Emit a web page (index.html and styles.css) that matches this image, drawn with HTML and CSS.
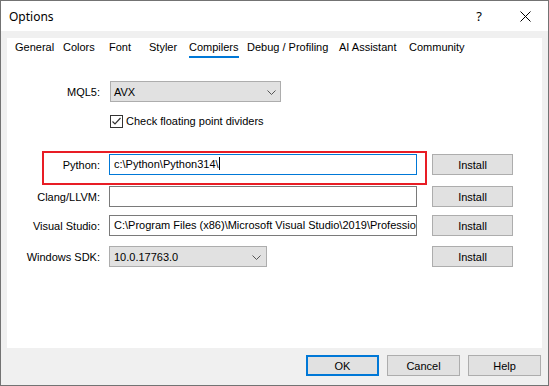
FILE: index.html
```html
<!DOCTYPE html>
<html lang="en">
<head>
  <meta charset="UTF-8">
  <title>Options</title>
  <link rel="stylesheet" href="styles.css">
</head>
<body>
  <div class="window">
    <div class="titlebar">
      <span class="title">Options</span>
      <div class="caption-btns">
        <span class="caption-btn help">?</span>
        <span class="caption-btn close">
          <svg width="11" height="11" viewBox="0 0 11 11"><path d="M0.5 0.5L10.5 10.5M10.5 0.5L0.5 10.5" stroke="#000" stroke-width="1"/></svg>
        </span>
      </div>
    </div>

    <div class="client">
      <div class="panel">
        <div class="tabs">
          <span class="tab">General</span>
          <span class="tab">Colors</span>
          <span class="tab">Font</span>
          <span class="tab">Styler</span>
          <span class="tab active"><span>Compilers</span></span>
          <span class="tab">Debug / Profiling</span>
          <span class="tab">AI Assistant</span>
          <span class="tab">Community</span>
        </div>

        <div class="form">
          <div class="row row-mql">
            <label class="label">MQL5:</label>
            <div class="select select-mql">
              <span>AVX</span>
              <svg class="chevron" width="9" height="5" viewBox="0 0 9 5"><path d="M0.5 0.5L4.5 4.5L8.5 0.5" fill="none" stroke="#555" stroke-width="1"/></svg>
            </div>
          </div>

          <div class="row row-check">
            <span class="checkbox">
              <svg width="11" height="11" viewBox="0 0 11 11"><path d="M1.5 5.5L4 8L9.5 2" fill="none" stroke="#333" stroke-width="1.2"/></svg>
            </span>
            <span>Check floating point dividers</span>
          </div>

          <div class="row row-python">
            <label class="label">Python:</label>
            <div class="input focused">c:\Python\Python314\<span class="caret"></span></div>
            <button class="btn install">Install</button>
          </div>

          <div class="row row-clang">
            <label class="label">Clang/LLVM:</label>
            <div class="input"></div>
            <button class="btn install">Install</button>
          </div>

          <div class="row row-vs">
            <label class="label">Visual Studio:</label>
            <div class="input">C:\Program Files (x86)\Microsoft Visual Studio\2019\Professional</div>
            <button class="btn install">Install</button>
          </div>

          <div class="row row-sdk">
            <label class="label">Windows SDK:</label>
            <div class="select select-sdk">
              <span>10.0.17763.0</span>
              <svg class="chevron" width="9" height="5" viewBox="0 0 9 5"><path d="M0.5 0.5L4.5 4.5L8.5 0.5" fill="none" stroke="#555" stroke-width="1"/></svg>
            </div>
            <button class="btn install install-sdk">Install</button>
          </div>
        </div>
      </div>

      <div class="footer">
        <button class="btn default">OK</button>
        <button class="btn">Cancel</button>
        <button class="btn">Help</button>
      </div>
    </div>
  </div>
</body>
</html>
```

FILE: styles.css
```css
* {
  margin: 0;
  padding: 0;
  box-sizing: border-box;
}
body {
  font-family: "Liberation Sans", Arial, sans-serif;
  font-size: 11px;
  color: #000;
  background: #fff;
}
.window {
  width: 549px;
  height: 386px;
  border: 1px solid #737373;
  display: flex;
  flex-direction: column;
}
.titlebar {
  height: 30px;
  background: #fff;
  display: flex;
  align-items: center;
  justify-content: space-between;
  padding-left: 8px;
}
.title {
  font-family: "Segoe UI", "Noto Sans", sans-serif;
  font-size: 12px;
}
.caption-btns {
  display: flex;
  height: 100%;
}
.caption-btn {
  width: 46px;
  height: 100%;
  display: flex;
  align-items: center;
  justify-content: center;
}
.caption-btn.help {
  font-family: "Segoe UI", "Noto Sans", sans-serif;
  font-size: 13px;
  padding-bottom: 1px;
}
.client {
  flex: 1;
  background: #f0f0f0;
  padding: 7px 6px 9px;
  display: flex;
  flex-direction: column;
}
.panel {
  height: 310px;
  background: #fff;
}
.tabs {
  display: grid;
  grid-template-columns: 48px 46px 40px 40px 58px 92px 70px auto;
  padding: 3px 0 0 8px;
  line-height: 13px;
}
.tab {
  white-space: nowrap;
}
.tab.active span {
  display: inline-block;
  padding-bottom: 2px;
  border-bottom: 2px solid #0078d7;
}
.form {
  padding-top: 23px;
}
.row {
  display: flex;
  align-items: center;
  height: 21px;
}
.label {
  width: 102px;
  padding-right: 9px;
  text-align: right;
  white-space: nowrap;
}
.select {
  height: 21px;
  background: #e1e1e1;
  border: 1px solid #adadad;
  display: flex;
  align-items: center;
  justify-content: space-between;
}
.select-mql {
  width: 171px;
  margin-left: 1px;
  padding: 0 4px 0 3px;
}
.select-sdk {
  width: 158px;
  padding: 0 5px 0 4px;
}
.chevron {
  margin-top: 1px;
}
.row-check {
  height: 13px;
  margin-top: 13px;
  padding-left: 103px;
  line-height: 13px;
}
.checkbox {
  width: 13px;
  height: 13px;
  border: 1px solid #333;
  margin-right: 3px;
  display: flex;
  align-items: center;
  justify-content: center;
}
.input {
  width: 308px;
  height: 21px;
  border: 1px solid #7a7a7a;
  background: #fff;
  padding-left: 4px;
  line-height: 19px;
  white-space: nowrap;
  overflow: hidden;
}
.input.focused {
  border-color: #0078d7;
}
.caret {
  display: inline-block;
  width: 1px;
  height: 13px;
  background: #000;
  vertical-align: -2px;
}
.row-python {
  position: relative;
  margin-top: 26px;
}
.row-python::before {
  content: "";
  position: absolute;
  left: 35px;
  top: -3px;
  width: 381px;
  height: 30px;
  border: 2px solid #e81d25;
}
.row-clang {
  margin-top: 11px;
}
.row-vs {
  margin-top: 8px;
}
.row-sdk {
  margin-top: 10px;
}
.btn {
  font-family: inherit;
  font-size: 11px;
  color: #000;
  height: 21px;
  background: #e1e1e1;
  border: 1px solid #adadad;
}
.install {
  width: 81px;
  margin-left: 15px;
}
.install-sdk {
  margin-left: 165px;
}
.footer {
  display: flex;
  justify-content: flex-end;
  gap: 8px;
  padding-top: 7px;
  padding-right: 1px;
}
.footer .btn {
  width: 73px;
}
.btn.default {
  border: 2px solid #0078d7;
}
```
